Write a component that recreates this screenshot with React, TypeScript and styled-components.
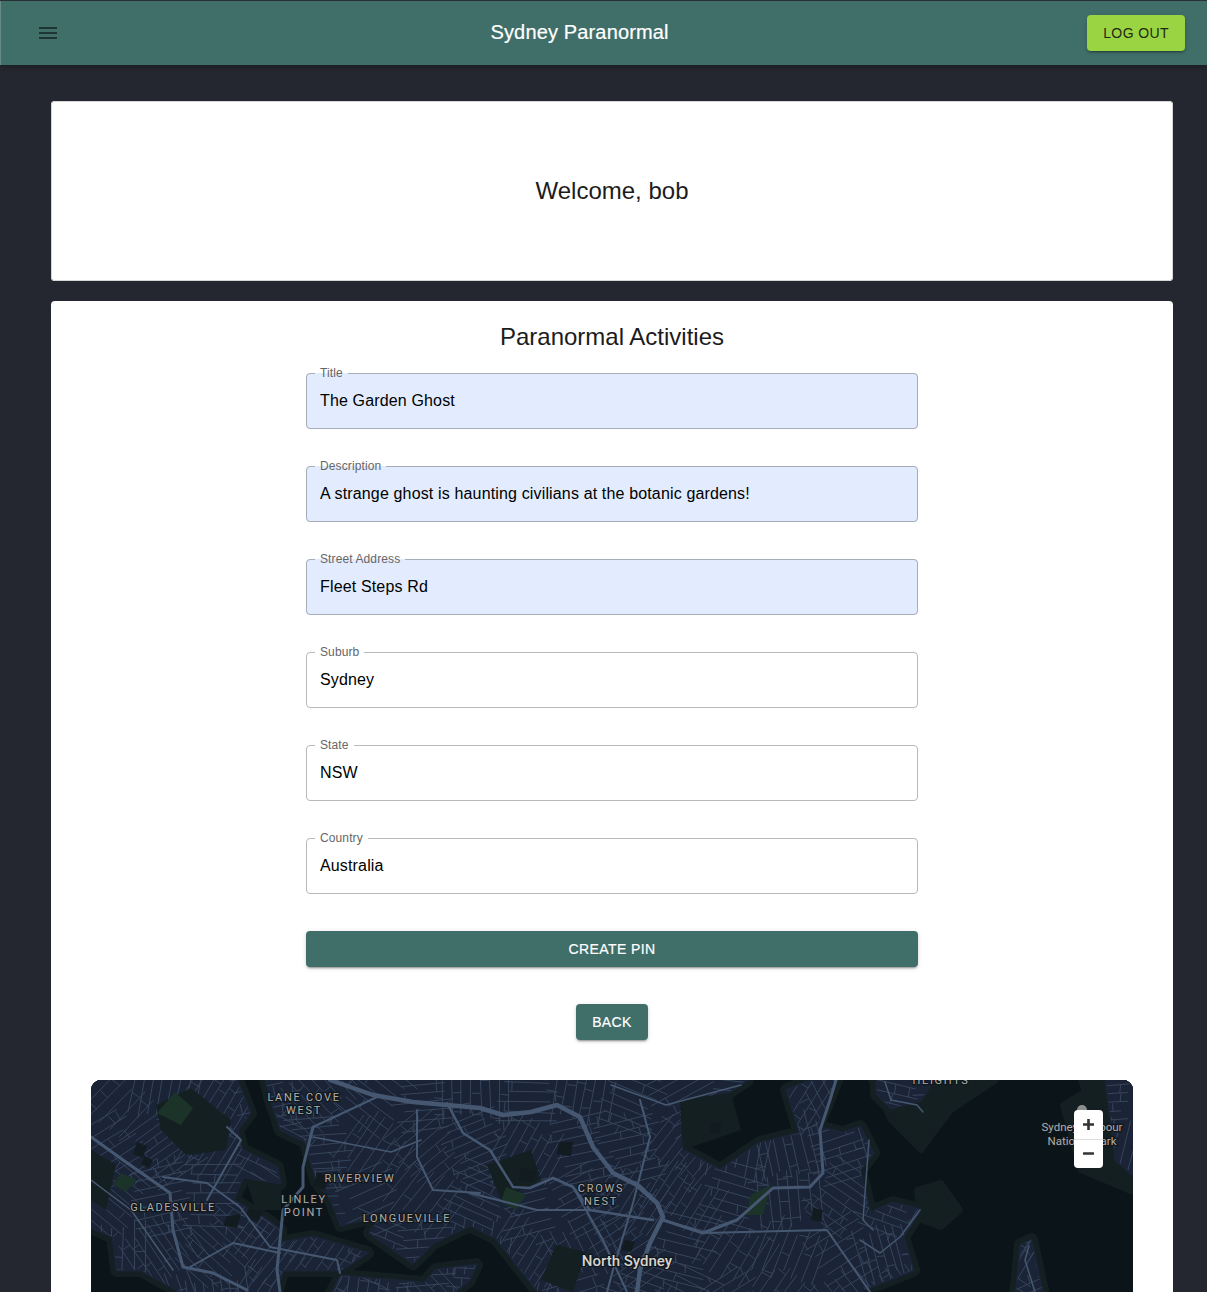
import styled, { createGlobalStyle } from 'styled-components';

const fields = [
  { label: 'Title', value: 'The Garden Ghost', filled: true },
  { label: 'Description', value: 'A strange ghost is haunting civilians at the botanic gardens!', filled: true },
  { label: 'Street Address', value: 'Fleet Steps Rd', filled: true },
  { label: 'Suburb', value: 'Sydney', filled: false },
  { label: 'State', value: 'NSW', filled: false },
  { label: 'Country', value: 'Australia', filled: false },
];

const GlobalStyle = createGlobalStyle`
  html, body {
    margin: 0;
    height: 100%;
    overflow: hidden;
    background: #24272f;
    font-family: "Liberation Sans", Arial, sans-serif;
  }
`;

const Page = styled.div`
  min-height: 100vh;
`;

const Header = styled.header`
  height: 64px;
  display: flex;
  align-items: center;
  justify-content: space-between;
  padding: 0 22px 0 28px;
  background: #406e69;
  border-top: 1px solid #2b3036;
  box-shadow: inset 1px 0 0 rgba(255, 255, 255, 0.2), 0 2px 4px rgba(0, 0, 0, 0.25);
`;

const MenuButton = styled.button`
  width: 40px;
  height: 40px;
  padding: 0;
  display: flex;
  align-items: center;
  justify-content: center;
  background: none;
  border: 0;
  color: #1f3533;
`;

const Brand = styled.h1`
  margin: 0 0 2px 4px;
  font-size: 20px;
  font-weight: 400;
  line-height: 32px;
  letter-spacing: 0.15px;
  color: #fff;
  -webkit-text-stroke: 0.2px #fff;
`;

const Button = styled.button<{ $tone?: 'lime' | 'teal'; $wide?: boolean }>`
  height: 36px;
  width: ${props => (props.$wide ? '100%' : 'auto')};
  padding: 0 16px;
  border: 0;
  border-radius: 4px;
  font-family: inherit;
  font-size: 14px;
  letter-spacing: 0.4px;
  background: ${props => (props.$tone === 'lime' ? '#9bd443' : '#406e69')};
  color: ${props => (props.$tone === 'lime' ? '#1c2a12' : '#fff')};
  -webkit-text-stroke: ${props => (props.$tone === 'lime' ? '0' : '0.2px #fff')};
  box-shadow: 0 3px 1px -2px rgba(0, 0, 0, 0.2), 0 2px 2px rgba(0, 0, 0, 0.14), 0 1px 5px rgba(0, 0, 0, 0.12);
`;

const Main = styled.main`
  display: flex;
  flex-direction: column;
  gap: 20px;
  padding: 36px 34px 0 51px;
`;

const Card = styled.section`
  background: #fff;
  border-radius: 4px;
  color: #1c1c1c;
`;

const WelcomeCard = styled(Card)`
  height: 180px;
  display: flex;
  align-items: center;
  justify-content: center;
  box-shadow: inset 0 0 0 1px #d6d6d6;
`;

const Heading = styled.h2`
  margin: 0;
  font-size: 24px;
  font-weight: 400;
  line-height: 32px;
  text-align: center;
`;

const ActivityCard = styled(Card)`
  padding: 20px 40px 40px;
`;

const PinForm = styled.form`
  width: 612px;
  margin: 13px auto 0;
  display: flex;
  flex-direction: column;
  align-items: center;
  gap: 30px;
`;

const Field = styled.fieldset<{ $filled: boolean }>`
  box-sizing: border-box;
  width: 100%;
  margin: 0;
  padding: 0 13px 8px;
  border: 1px solid ${props => (props.$filled ? '#a6adb9' : '#b9b9b9')};
  border-radius: 4px;
  background: ${props => (props.$filled ? '#e2ecfe' : '#fff')};
`;

const FieldLabel = styled.legend`
  margin-left: -5px;
  padding: 0 5px;
  font-size: 12px;
  line-height: 15px;
  letter-spacing: 0.11px;
  color: #666;
`;

const FieldInput = styled.input`
  display: block;
  width: 100%;
  height: 39px;
  padding: 0;
  border: 0;
  outline: 0;
  background: transparent;
  font-family: inherit;
  font-size: 16px;
  letter-spacing: 0.15px;
  color: #000;
`;

const FormActions = styled.div`
  width: 100%;
  margin-top: 7px;
  display: flex;
  flex-direction: column;
  align-items: center;
  gap: 37px;
`;

const MapFrame = styled.div`
  position: relative;
  height: 300px;
  margin-top: 40px;
  border-radius: 10px;
  overflow: hidden;
  background: #0b1418;
`;

const MapCanvas = styled.svg`
  display: block;
  width: 100%;
  height: 100%;
`;

const MapLabel = styled.text<{ $size?: number; $spacing?: number; $strong?: boolean }>`
  font-family: Roboto, "Liberation Sans", sans-serif;
  font-size: ${props => props.$size ?? 11}px;
  letter-spacing: ${props => props.$spacing ?? 1.7}px;
  font-weight: ${props => (props.$strong ? 500 : 400)};
  fill: ${props => (props.$strong ? '#d6d4cd' : '#b0aea8')};
  stroke: #10171d;
  stroke-width: 2.5px;
  paint-order: stroke;
  text-anchor: middle;
`;

const ZoomControl = styled.div`
  position: absolute;
  top: 30px;
  right: 30px;
  width: 29px;
  height: 58px;
  display: flex;
  flex-direction: column;
  border-radius: 4px;
  overflow: hidden;
  background: #fff;
`;

const ZoomButton = styled.button`
  flex: 1;
  padding: 0;
  display: flex;
  align-items: center;
  justify-content: center;
  background: none;
  border: 0;
  color: #333;
  & + & {
    border-top: 1px solid #ddd;
  }
`;

// land shapes, in map pixels
const urban = [
  '0,0 146,0 159,33 146,50 151,70 186,87 189,103 152,97 142,120 176,140 189,150 189,163 222,157 276,173 250,190 192,190 184,215 95,215 50,190 26,190 22,157 0,147',
  '250,196 332,203 345,215 240,215',
  '332,205 345,190 385,185 378,200 360,215 335,215',
  '175,0 180,20 190,50 215,62 225,100 240,120 250,145 290,135 279,153 322,183 342,163 379,145 405,158 430,190 450,215 760,215 789,203 822,190 812,157 829,130 802,123 779,133 769,90 782,73 769,47 752,53 726,47 736,23 745,0 722,0 696,10 709,53 669,63 629,90 592,70 589,47 636,13 656,0',
  '786,0 842,0 830,20 800,28 786,14',
  '1015,0 1042,0 1042,95 1025,80',
  '930,165 940,160 952,215 925,215',
];

const bushUnder = [
  '972,25 1000,8 1042,90 1042,112 990,90',
  '780,0 905,0 860,30 830,70 800,40',
  '826,110 850,103 869,130 850,147 830,140',
  '990,0 1042,0 1042,30 1000,30',
];

const bushOver = [
  '65,25 100,8 140,40 135,70 95,75 70,50',
  '155,100 190,105 190,130 165,130',
  '589,20 640,13 650,50 592,70',
  '396,85 440,70 450,100 410,120',
  '0,70 25,85 15,130 0,120',
  '465,165 495,172 482,212 450,200',
];

const greenPatches = [
  '84,12 102,28 90,45 66,33',
  '30,93 46,100 34,112 22,104',
  '415,107 435,115 425,130 410,122',
  '660,115 680,105 672,135 655,135',
];

const darkBlocks = [
  '46,62 56,66 52,78 42,74',
  '54,76 62,80 58,88 50,84',
  '158,128 172,132 166,142 154,138',
  '226,92 238,96 234,110 222,106',
  '468,62 482,62 480,76 466,74',
  '430,88 446,90 442,102 428,100',
  '620,42 630,42 628,54 618,54',
  '722,128 732,130 730,142 720,140',
  '136,136 150,134 146,148 132,146',
  '534,160 544,162 540,172 530,170',
];

type MainRoad = { width: number; points: string };

const mainRoads: MainRoad[] = [
  { width: 4.5, points: '239,0 282,15 322,22 356,25 389,28 412,35 440,32 466,25 489,37 502,67 522,93 546,105 566,123 572,137 559,163 549,190 546,212' },
  { width: 3, points: '0,57 32,80 79,113 82,150 92,187 122,193 156,210' },
  { width: 3, points: '222,47 212,87 212,107 192,130 186,190 189,212' },
  { width: 2, points: '286,17 222,47' },
  { width: 2, points: '326,30 326,77 342,110 389,113' },
  { width: 2.5, points: '356,23 372,53 399,70 422,107 439,108 462,98 482,107 499,130 562,140' },
  { width: 3, points: '572,140 612,153 646,140 682,108 719,107 732,93 729,50 739,20 745,0' },
  { width: 2, points: '379,113 446,130 499,130' },
  { width: 2, points: '549,20 559,57 542,123 522,190 516,212' },
  { width: 2, points: '482,107 512,160 536,212' },
  { width: 2, points: '72,97 116,103 149,127 179,167 246,180 249,193' },
  { width: 2, points: '99,187 142,163 189,173' },
  { width: 2, points: '136,47 150,60 116,120' },
  { width: 2, points: '612,153 736,150 779,212' },
  { width: 1.5, points: '829,130 809,157 789,173 769,160' },
  { width: 1.5, points: '222,57 300,72 330,60' },
  { width: 1.5, points: '0,100 40,130 82,190' },
  { width: 1.5, points: '778,60 775,100 772,140 782,150' },
  { width: 1.5, points: '520,5 575,25 650,5' },
  { width: 1.5, points: '938,166 934,180 944,212' },
  { width: 1.5, points: '794,2 800,20 826,25 832,32' },
];

// small seeded generator so the street pattern stays the same between runs
function streetGrid() {
  let state = 48271;
  const rand = () => {
    state = (state * 1103515245 + 12345) % 2147483648;
    return state / 2147483648;
  };
  const cell = 52;
  const reach = 34;
  let d = '';
  for (let cx = 20; cx < 1060; cx += cell) {
    for (let cy = 15; cy < 240; cy += cell) {
      const angle = rand() * Math.PI;
      const cos = Math.cos(angle);
      const sin = Math.sin(angle);
      const at = (u: number, v: number) =>
        `${(cx + u * cos - v * sin).toFixed(1)} ${(cy + u * sin + v * cos).toFixed(1)}`;
      const gap = 7 + rand() * 3;
      for (let v = -reach; v <= reach; v += gap + rand() * 2) {
        const from = -reach + rand() * 16;
        const to = reach - rand() * 16;
        d += `M${at(from, v)}L${at(to, v + (rand() - 0.5) * 3)}`;
        // short cross streets hanging off each street
        for (let u = from + 8; u < to; u += 14 + rand() * 14) {
          if (rand() > 0.55) {
            d += `M${at(u, v)}L${at(u + (rand() - 0.5) * 3, v + gap)}`;
          }
        }
      }
    }
  }
  return d;
}

const streetPath = streetGrid();

function MapView() {
  return (
    <MapFrame>
      <MapCanvas viewBox="0 0 1042 300" preserveAspectRatio="xMinYMin slice">
        <defs>
          <clipPath id="urban-clip">
            {urban.map(points => (
              <polygon key={points} points={points} />
            ))}
          </clipPath>
        </defs>
        {bushUnder.map(points => (
          <polygon key={points} points={points} fill="#141f22" stroke="#141f22" strokeWidth={6} strokeLinejoin="round" />
        ))}
        {urban.map(points => (
          <polygon
            key={points}
            points={points}
            fill="#141f22"
            stroke="#141f22"
            strokeWidth={14}
            strokeLinejoin="round"
          />
        ))}
        {urban.map(points => (
          <polygon
            key={points}
            points={points}
            fill="#1a2436"
            stroke="#1a2436"
            strokeWidth={3}
            strokeLinejoin="round"
          />
        ))}
        <path d={streetPath} clipPath="url(#urban-clip)" fill="none" stroke="#3a4860" strokeWidth={0.9} />
        {bushOver.map(points => (
          <polygon key={points} points={points} fill="#141f22" />
        ))}
        {greenPatches.map(points => (
          <polygon key={points} points={points} fill="#1c3329" />
        ))}
        {darkBlocks.map(points => (
          <polygon key={points} points={points} fill="#121b20" />
        ))}
        {mainRoads.map(road => (
          <polyline
            key={road.points}
            points={road.points}
            fill="none"
            stroke="#465871"
            strokeWidth={road.width}
            strokeLinejoin="round"
            strokeLinecap="round"
          />
        ))}
        <MapLabel x={213} y={21}>LANE COVE</MapLabel>
        <MapLabel x={213} y={34}>WEST</MapLabel>
        <MapLabel x={82} y={131} $spacing={1.5}>GLADESVILLE</MapLabel>
        <MapLabel x={269} y={102}>RIVERVIEW</MapLabel>
        <MapLabel x={213} y={123}>LINLEY</MapLabel>
        <MapLabel x={213} y={136}>POINT</MapLabel>
        <MapLabel x={316} y={142}>LONGUEVILLE</MapLabel>
        <MapLabel x={510} y={112}>CROWS</MapLabel>
        <MapLabel x={510} y={125}>NEST</MapLabel>
        <MapLabel x={536} y={186} $size={15} $spacing={0} $strong>North Sydney</MapLabel>
        <MapLabel x={850} y={4}>HEIGHTS</MapLabel>
        <circle cx={991} cy={30} r={5} fill="#8d8f8e" />
        <MapLabel x={991} y={51} $size={11.5} $spacing={0}>Sydney Harbour</MapLabel>
        <MapLabel x={991} y={65} $size={11.5} $spacing={0}>National Park</MapLabel>
      </MapCanvas>
      <ZoomControl>
        <ZoomButton type="button" aria-label="Zoom in">
          <svg width="13" height="13" viewBox="0 0 13 13">
            <path d="M5.2 1h2.6v4.2H12v2.600H7.800V12H5.200V7.800H1V5.200h4.200z" fill="currentColor" />
          </svg>
        </ZoomButton>
        <ZoomButton type="button" aria-label="Zoom out">
          <svg width="13" height="13" viewBox="0 0 13 13">
            <rect x="1" y="5.200" width="11" height="2.600" rx="0.500" fill="currentColor" />
          </svg>
        </ZoomButton>
      </ZoomControl>
    </MapFrame>
  );
}

export default function App() {
  return (
    <Page>
      <GlobalStyle />
      <Header>
        <MenuButton type="button" aria-label="menu">
          <svg width="24" height="24" viewBox="0 0 24 24" fill="currentColor">
            <path d="M3 18h18v-2H3v2zm0-5h18v-2H3v2zm0-7v2h18V6H3z" />
          </svg>
        </MenuButton>
        <Brand>Sydney Paranormal</Brand>
        <Button type="button" $tone="lime">LOG OUT</Button>
      </Header>
      <Main>
        <WelcomeCard>
          <Heading>Welcome, bob</Heading>
        </WelcomeCard>
        <ActivityCard>
          <Heading>Paranormal Activities</Heading>
          <PinForm onSubmit={e => e.preventDefault()}>
            {fields.map(field => (
              <Field key={field.label} $filled={field.filled}>
                <FieldLabel>{field.label}</FieldLabel>
                <FieldInput defaultValue={field.value} />
              </Field>
            ))}
            <FormActions>
              <Button type="submit" $wide>CREATE PIN</Button>
              <Button type="button">BACK</Button>
            </FormActions>
          </PinForm>
          <MapView />
        </ActivityCard>
      </Main>
    </Page>
  );
}
